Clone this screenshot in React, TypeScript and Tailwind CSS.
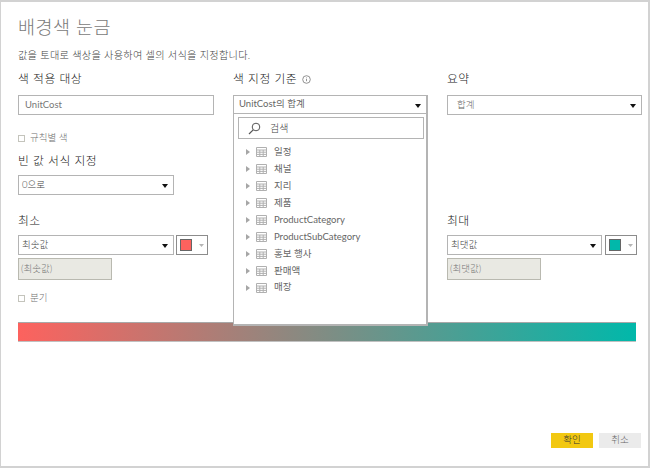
import React from 'react';

const FONT = '[font-family:"Lato","Noto_Sans_CJK_KR",sans-serif]';

const TABLES = ['일정', '채널', '지리', '제품', 'ProductCategory', 'ProductSubCategory', '홍보 행사', '판매액', '매장'];

const Caret = () => (
  <svg width="6" height="4" viewBox="0 0 6 4" className="mt-[2px] shrink-0">
    <path d="M0 0h6L3 4z" fill="#111" />
  </svg>
);

const TableIcon = () => (
  <svg width="11" height="10" viewBox="0 0 11 10" className="shrink-0">
    <path d="M.5.5h10v9H.5zM.5 3h10M.5 5.2h10M.5 7.4h10M3.8 3v6.5M7.2 3v6.5" fill="none" stroke="#b0b0b0" strokeWidth="1" />
  </svg>
);

const Label = ({ children }: { children: React.ReactNode }) => (
  <div className="h-[16px] text-[11.8px] font-light leading-[16px] tracking-[0.5px] text-[#222]">{children}</div>
);

const Select = ({ value, width }: { value: string; width: string }) => (
  <div className={`flex h-[20px] items-center justify-between border border-[#b4b4b4] bg-white pl-[3px] pr-[5px] text-[9.5px] font-light text-[#444] ${width}`}>
    <span>{value}</span>
    <Caret />
  </div>
);

const Swatch = ({ color }: { color: string }) => (
  <div className="flex h-[20px] w-[32px] items-center gap-[7px] border border-[#8c8c8c] bg-white pl-[3px]">
    <div className={`h-[12px] w-[12px] border border-[#666] ${color}`} />
    <svg width="5" height="3" viewBox="0 0 5 3">
      <path d="M0 0h5L2.5 3z" fill="#b5b5b5" />
    </svg>
  </div>
);

const Disabled = ({ value }: { value: string }) => (
  <div className="mt-[3px] flex h-[22px] w-[94px] items-center border border-[#b9b9b0] bg-[#e9e9e3] pl-[2px] text-[9.5px] font-light text-[#777]">
    {value}
  </div>
);

const Check = ({ label }: { label: string }) => (
  <div className="flex items-center gap-[5px] text-[9.5px] font-light text-[#707070]">
    <div className="box-content h-[5px] w-[5px] border border-[#c4c4bc] bg-white" />
    <span>{label}</span>
  </div>
);

export default function App() {
  return (
    <div className={`relative h-[468px] w-[650px] overflow-hidden bg-white ${FONT}`}>
      <div className="h-[468px] w-[650px] border-[2px] border-l-[1px] border-[#d2d2d2] pl-[17px]">
        <h1 className="pt-[12px] text-[18.5px] font-light leading-[26px] tracking-[0.5px] text-[#7a7a7a]">배경색 눈금</h1>
        <p className="mt-[8px] text-[10.2px] font-light leading-[14px] tracking-[0.25px] text-[#444]">
          값을 토대로 색상을 사용하여 셀의 서식을 지정합니다.
        </p>

        <div className="mt-[9px] flex">
          <div className="w-[215px]">
            <Label>색 적용 대상</Label>
            <div className="mt-[8px] flex h-[20px] w-[196px] items-center border border-[#b4b4b4] pl-[6px] text-[9.5px] text-[#777]">
              UnitCost
            </div>
            <div className="mt-[16px]">
              <Check label="규칙별 색" />
            </div>
            <div className="mt-[8px]">
              <Label>빈 값 서식 지정</Label>
            </div>
            <div className="mt-[6px]">
              <Select value="0으로" width="w-[156px]" />
            </div>
          </div>

          <div className="relative w-[214px]">
            <div className="flex items-center gap-[5px]">
              <Label>색 지정 기준</Label>
              <svg width="9" height="9" viewBox="0 0 9 9">
                <circle cx="4.5" cy="4.5" r="3.8" fill="none" stroke="#777" strokeWidth="0.8" />
                <path d="M4.5 3.9v2.3M4.5 2.5v.7" stroke="#777" strokeWidth="0.8" />
              </svg>
            </div>
            <div className="absolute left-0 top-[24px] z-10 h-[231px] w-[195px] border border-b-[2px] border-r-[2px] border-[#b4b4b4] bg-white">
              <div className="flex h-[18px] items-center justify-between border-b border-[#b4b4b4] pl-[5px] pr-[5px] text-[9.5px] text-[#666]">
                <span>UnitCost의 합계</span>
                <Caret />
              </div>
              <div className="ml-[4px] mr-[2px] mt-[3px] flex h-[22px] items-center gap-[9px] border border-[#b4b4b4] pl-[9px] text-[10px] font-light text-[#444]">
                <svg width="13" height="13" viewBox="0 0 13 13">
                  <circle cx="8" cy="5" r="3.8" fill="none" stroke="#555" strokeWidth="1" />
                  <path d="M5.2 7.8 1 12" stroke="#555" strokeWidth="1.2" />
                </svg>
                <span>검색</span>
              </div>
              <ul className="mt-[5px]">
                {TABLES.map((name) => (
                  <li key={name} className="flex h-[16.9px] items-center pl-[12px] text-[9.5px] text-[#666]">
                    <svg width="4" height="6" viewBox="0 0 4 6" className="mr-[6px] shrink-0">
                      <path d="M0 0l4 3-4 3z" fill="#a6a6a6" />
                    </svg>
                    <TableIcon />
                    <span className="ml-[7px]">{name}</span>
                  </li>
                ))}
              </ul>
            </div>
          </div>

          <div className="w-[195px]">
            <Label>요약</Label>
            <div className="mt-[8px] flex h-[20px] items-center justify-between border border-[#b4b4b4] pl-[9px] pr-[5px] text-[9.5px] font-light text-[#666]">
              <span>합계</span>
              <Caret />
            </div>
          </div>
        </div>

        <div className="mt-[18px] flex">
          <div className="w-[429px]">
            <Label>최소</Label>
            <div className="mt-[6px] flex gap-[2px]">
              <Select value="최솟값" width="w-[156px]" />
              <Swatch color="bg-[#fd625e]" />
            </div>
            <Disabled value="(최솟값)" />
            <div className="mt-[11px]">
              <Check label="분기" />
            </div>
          </div>
          <div>
            <Label>최대</Label>
            <div className="mt-[6px] flex gap-[3px]">
              <Select value="최댓값" width="w-[155px]" />
              <Swatch color="bg-[#01b8aa]" />
            </div>
            <Disabled value="(최댓값)" />
          </div>
        </div>

        <div className="mt-[16px] h-[20px] w-[618px] border-b border-t border-b-[#c0c0c0] border-t-[#a8a8a8] [background:linear-gradient(to_right,#fd625e,#01b8aa)]" />

        <div className="mt-[91px] flex w-[623px] justify-end gap-[6px] text-[9.5px] font-light">
          <div className="flex h-[15px] w-[42px] items-center justify-center bg-[#f2c811] text-[#333]">확인</div>
          <div className="flex h-[15px] w-[42px] items-center justify-center bg-[#ebebeb] text-[#666]">취소</div>
        </div>
      </div>
    </div>
  );
}
